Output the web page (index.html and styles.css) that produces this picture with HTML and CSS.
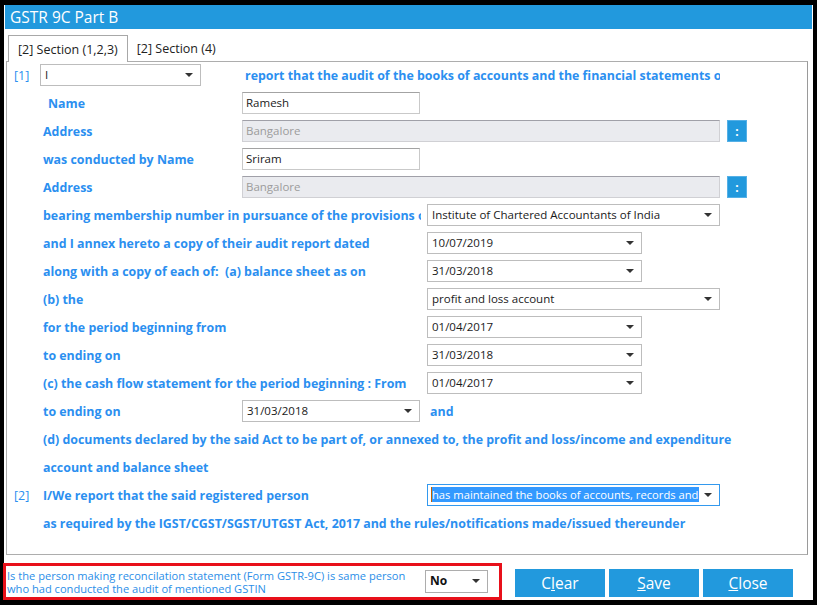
FILE: index.html
```html
<!DOCTYPE html>
<html>
<head>
<meta charset="utf-8">
<link rel="stylesheet" href="styles.css">
</head>
<body>
<div class="window">
  <div class="titlebar">GSTR 9C Part B</div>
  <div class="tabs">
    <div class="tab active">[2] Section (1,2,3)</div>
    <div class="tab">[2] Section (4)</div>
  </div>
  <div class="panel">
    <div class="grid">
      <!-- row 1 -->
      <div class="num">[1]</div>
      <div class="c2"><div class="combo w161 shift">I<span class="arrow"></span></div></div>
      <div class="lbl c34 pad3 clip">report that the audit of the books of accounts and the financial statements of</div>

      <div class="lbl c2 indent">Name</div>
      <div class="c3"><div class="input w178">Ramesh</div></div>

      <div class="lbl c2">Address</div>
      <div class="c34 hrow"><div class="input disabled w478">Bangalore</div><div class="dots">:</div></div>

      <div class="lbl c2">was conducted by Name</div>
      <div class="c3"><div class="input w178">Sriram</div></div>

      <div class="lbl c2">Address</div>
      <div class="c34 hrow"><div class="input disabled w478">Bangalore</div><div class="dots">:</div></div>

      <div class="lbl c23 clip">bearing membership number in pursuance of the provisions of</div>
      <div class="c4"><div class="combo w293">Institute of Chartered Accountants of India<span class="arrow"></span></div></div>

      <div class="lbl c23">and I annex hereto a copy of their audit report dated</div>
      <div class="c4"><div class="combo w215">10/07/2019<span class="arrow"></span></div></div>

      <div class="lbl c23">along with a copy of each of:&nbsp; (a) balance sheet as on</div>
      <div class="c4"><div class="combo w215">31/03/2018<span class="arrow"></span></div></div>

      <div class="lbl c23">(b) the</div>
      <div class="c4"><div class="combo w293">profit and loss account<span class="arrow"></span></div></div>

      <div class="lbl c23">for the period beginning from</div>
      <div class="c4"><div class="combo w215">01/04/2017<span class="arrow"></span></div></div>

      <div class="lbl c23">to ending on</div>
      <div class="c4"><div class="combo w215">31/03/2018<span class="arrow"></span></div></div>

      <div class="lbl c23">(c) the cash flow statement for the period beginning : From</div>
      <div class="c4"><div class="combo w215">01/04/2017<span class="arrow"></span></div></div>

      <div class="lbl c2">to ending on</div>
      <div class="c3"><div class="combo w178">31/03/2018<span class="arrow"></span></div></div>
      <div class="lbl c4 pad3">and</div>

      <div class="lbl c24">(d) documents declared by the said Act to be part of, or annexed to, the profit and loss/income and expenditure</div>

      <div class="lbl c24">account and balance sheet</div>

      <div class="num">[2]</div>
      <div class="lbl c23">I/We report that the said registered person</div>
      <div class="c4"><div class="combo w293 focus"><span class="sel">has maintained the books of accounts, records and</span><span class="arrow"></span></div></div>

      <div class="lbl c24">as required by the IGST/CGST/SGST/UTGST Act, 2017 and the rules/notifications made/issued thereunder</div>
    </div>
  </div>
  <div class="footer">
    <div class="question">
      <div class="qtext">Is the person making reconcilation statement (Form GSTR-9C) is same person<br>who had conducted the audit of mentioned GSTIN</div>
      <div class="combo small">No<span class="arrow"></span></div>
    </div>
    <div class="buttons">
      <div class="btn">C<u>l</u>ear</div>
      <div class="btn"><u>S</u>ave</div>
      <div class="btn"><u>C</u>lose</div>
    </div>
  </div>
</div>
</body>
</html>
```
FILE: styles.css
```css
html, body {
  margin: 0;
  padding: 0;
  background: #000;
}
body {
  width: 817px;
  height: 605px;
  overflow: hidden;
  font-family: "Open Sans", "Noto Sans", sans-serif;
}
.window {
  margin: 5px 4px 5px 4px;
  width: 809px;
  height: 595px;
  background: #fff;
  display: flex;
  flex-direction: column;
}
.titlebar {
  height: 24px;
  margin: 0 1px 0 1px;
  background: #2299dd;
  color: #fff;
  font-size: 15.5px;
  line-height: 24px;
  padding-left: 5px;
}
.tabs {
  display: flex;
  margin-top: 6px;
  padding-left: 4px;
  height: 26px;
  align-items: stretch;
}
.tab {
  font-size: 12.5px;
  color: #222;
  padding: 0 9px 0 9px;
  line-height: 27px;
}
.tab.active {
  border: 1px solid #a8a8a8;
  border-bottom: none;
  background: #fff;
  position: relative;
  z-index: 1;
  height: 26px;
  padding: 0 9px;
}
.panel {
  margin-left: 2px;
  width: 800px;
  height: 494px;
  border: 1px solid #adadad;
  border-right-color: #9a9a9a;
}
.grid {
  display: grid;
  grid-template-columns: 29px 199px 185px 1fr;
  grid-auto-rows: 28px;
  align-items: center;
  padding-left: 7px;
  margin-top: -1px;
}
.num {
  grid-column: 1;
  color: #2b8ff0;
  font-size: 12.5px;
}
.lbl {
  color: #2b8ff0;
  font-weight: bold;
  font-size: 12.4px;
  white-space: nowrap;
}
.c2 { grid-column: 2; }
.c3 { grid-column: 3; }
.c4 { grid-column: 4; }
.c23 { grid-column: 2 / 4; }
.c34 { grid-column: 3 / 5; }
.c24 { grid-column: 2 / 5; }
.pad3 { padding-left: 3px; }
.indent { padding-left: 5px; }
.clip { overflow: hidden; }
.c23.clip { width: 378px; }
.c34.clip { width: 475px; }
.hrow {
  display: flex;
  gap: 7px;
  align-items: center;
}
.input, .combo {
  box-sizing: border-box;
  height: 22px;
  border: 1px solid #c9c9c9;
  border-top-color: #a3a3a3;
  background: #fff;
  font-size: 11.5px;
  color: #1a1a1a;
  line-height: 20px;
  padding-left: 3px;
  white-space: nowrap;
  overflow: hidden;
}
.combo {
  position: relative;
  border: 1px solid #bdbdbd;
  padding-left: 4px;
}
.shift { margin-left: -3px; }
.arrow {
  position: absolute;
  right: 7px;
  top: 8px;
  width: 0;
  height: 0;
  border-left: 4px solid transparent;
  border-right: 4px solid transparent;
  border-top: 4px solid #333;
}
.input.disabled {
  background: #eaebef;
  color: #9c9c9c;
  border-color: #a0a0a8 #d0d0d4 #d0d0d4 #d0d0d4;
}
.w161 { width: 161px; }
.w178 { width: 178px; }
.w215 { width: 215px; }
.w293 { width: 293px; }
.w478 { width: 478px; }
.dots {
  width: 20px;
  height: 22px;
  background: #2299dd;
  color: #fff;
  font-weight: bold;
  font-size: 12px;
  text-align: center;
  line-height: 21px;
  box-sizing: border-box;
  border: 1px solid #55b0e6;
}
.combo.focus {
  border-color: #3399ee;
  padding-left: 3px;
}
.sel {
  background: #3399ff;
  color: #fff;
  border-left: 1px solid #c06000;
  padding-right: 1px;
  font-size: 11.2px;
}
.footer {
  display: flex;
  align-items: flex-start;
  margin-top: 8px;
}
.question {
  margin-left: -1px;
  box-sizing: border-box;
  width: 499px;
  height: 37px;
  border: 3px solid #e8101a;
  display: flex;
  align-items: center;
  padding-left: 1px;
}
.qtext {
  width: 418px;
  font-size: 11.1px;
  line-height: 13px;
  color: #2a8ee8;
  white-space: nowrap;
}
.combo.small {
  width: 63px;
  height: 23px;
  font-weight: bold;
  font-size: 12px;
  color: #111;
  border-color: #adadad;
}
.buttons {
  display: flex;
  gap: 4px;
  margin-left: 13px;
  margin-top: 6px;
}
.btn {
  width: 90px;
  height: 28px;
  background: #2299dd;
  color: #fff;
  font-size: 15.5px;
  line-height: 28px;
  text-align: center;
}
```
